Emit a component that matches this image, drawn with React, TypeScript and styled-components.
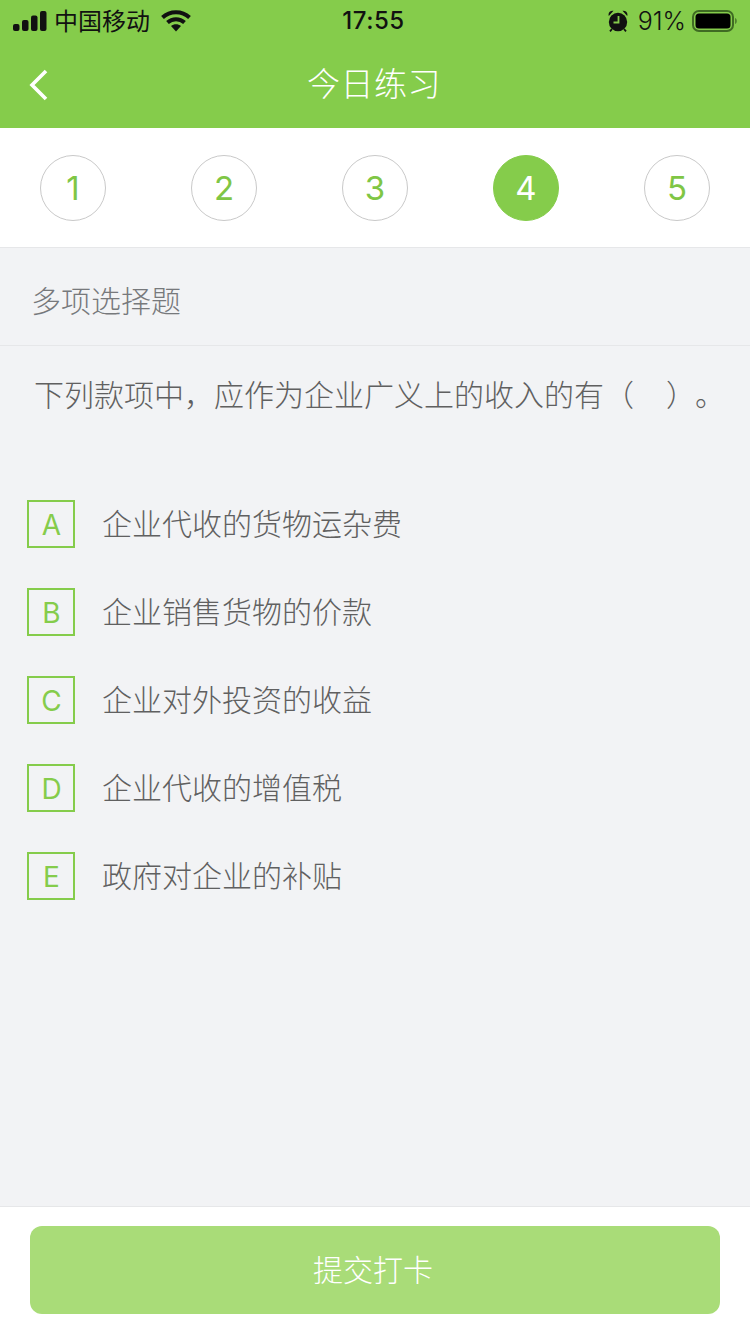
import React from "react";
import styled, { createGlobalStyle } from "styled-components";

const GlobalStyle = createGlobalStyle`
  html, body { margin: 0; padding: 0; background: #f2f3f5; }
  * { box-sizing: border-box; }
  body { font-family: "Noto Sans CJK SC", "Liberation Sans", sans-serif; }
`;

const Page = styled.div`
  width: 750px;
  height: 1334px;
  display: flex;
  flex-direction: column;
  background: #f2f3f5;
  overflow: hidden;
`;
const Header = styled.header`
  height: 128px;
  flex: none;
  background: #85cc4b;
  display: flex;
  flex-direction: column;
`;
const StatusBar = styled.div`
  height: 40px;
  display: grid;
  grid-template-columns: 1fr auto 1fr;
  align-items: center;
  padding: 1px 13px 0;
  color: #111;
`;
const StatusLeft = styled.div`
  display: flex;
  align-items: center;
`;
const Carrier = styled.span`
  font-size: 24px;
  line-height: 34px;
  padding-bottom: 2px;
  margin-left: 7px;
  margin-right: 11px;
`;
const Clock = styled.span`
  font: 500 24px/40px "Inter", "Liberation Sans", sans-serif;
  letter-spacing: 0.5px;
  margin-left: -3px;
`;
const StatusRight = styled.div`
  display: flex;
  align-items: center;
  justify-content: flex-end;
`;
const Percent = styled.span`
  font: 300 25px/40px "Inter", "Liberation Sans", sans-serif;
  margin: 0 6px 0 10px;
`;
const NavBar = styled.div`
  position: relative;
  height: 88px;
  display: flex;
  align-items: center;
  justify-content: center;
  padding-bottom: 4px;
`;
const Back = styled.svg`
  position: absolute;
  left: 27px;
  top: 28px;
`;
const Title = styled.h1`
  margin: 0 2px 0 0;
  font-size: 33px;
  font-weight: 300;
  letter-spacing: 0.5px;
  color: #fff;
`;
const Stepper = styled.nav`
  height: 120px;
  flex: none;
  background: #fff;
  border-bottom: 1px solid #e6e7e9;
  display: flex;
  justify-content: space-between;
  padding: 27px 40px 0;
`;
const Step = styled.div<{ $active?: boolean }>`
  width: 66px;
  height: 66px;
  border-radius: 50%;
  border: 1px solid ${(p) => (p.$active ? "#85cc4b" : "#c9c9c9")};
  background: ${(p) => (p.$active ? "#85cc4b" : "#fff")};
  color: ${(p) => (p.$active ? "#fff" : "#7fc645")};
  font: 400 33px/64px "Inter", "Liberation Sans", sans-serif;
  text-align: center;
`;
const SectionHead = styled.div`
  height: 98px;
  flex: none;
  padding: 0 31px;
  border-bottom: 1px solid #e6e7e9;
  font-size: 30px;
  font-weight: 300;
  line-height: 102px;
  color: #77797c;
`;
const Question = styled.p`
  margin: 0;
  height: 142px;
  flex: none;
  padding: 24px 0 0 34px;
  font-size: 30px;
  font-weight: 300;
  line-height: 46px;
  color: #606060;
  white-space: nowrap;
`;
const Closing = styled.span`
  margin: 0 14px 0 32px;
`;
const Options = styled.ul`
  list-style: none;
  margin: 0;
  padding: 12px 0 0 27px;
  display: flex;
  flex-direction: column;
  gap: 40px;
  flex: 1;
`;
const Option = styled.li`
  display: flex;
  align-items: center;
  height: 48px;
`;
const Letter = styled.span`
  width: 48px;
  height: 48px;
  flex: none;
  border: 2px solid #85cc4b;
  color: #85cc4b;
  font: 400 28px/46px "Inter", "Liberation Sans", sans-serif;
  text-align: center;
  padding-left: 1px;
  margin-right: 27px;
`;
const OptionText = styled.span`
  font-size: 30px;
  font-weight: 300;
  line-height: 44px;
  padding-bottom: 4px;
  color: #606060;
`;
const Footer = styled.footer`
  height: 128px;
  flex: none;
  background: #fff;
  border-top: 1px solid #e6e7e9;
  padding: 19px 30px 0;
`;
const Submit = styled.button`
  width: 690px;
  height: 88px;
  border: 0;
  border-radius: 12px;
  background: #a9dc78;
  color: #fff;
  font-family: inherit;
  font-size: 30px;
  font-weight: 300;
  padding: 0 4px 4px 0;
`;

const options = [
  ["A", "企业代收的货物运杂费"],
  ["B", "企业销售货物的价款"],
  ["C", "企业对外投资的收益"],
  ["D", "企业代收的增值税"],
  ["E", "政府对企业的补贴"],
];

const Signal = () => (
  <svg width="34" height="20" viewBox="0 0 34 20" fill="#111">
    <rect x="0" y="13" width="6.5" height="7" rx="2" />
    <rect x="9" y="9" width="6.5" height="11" rx="2" />
    <rect x="18" y="4.5" width="6.5" height="15.5" rx="2" />
    <rect x="27" y="0" width="6.5" height="20" rx="2" />
  </svg>
);
const Wifi = () => (
  <svg width="30" height="22" viewBox="0 0 30 22" fill="none" stroke="#111" strokeWidth="4">
    <path d="M1.5 7.5C9 .5 21 .5 28.5 7.5" />
    <path d="M6.5 12.5c4.8-4.4 12.2-4.4 17 0" />
    <path d="M15 21.5l-5-5.5c2.8-2.2 7.2-2.2 10 0z" fill="#111" stroke="none" />
  </svg>
);
const Alarm = () => (
  <svg width="20" height="22" viewBox="0 0 20 22">
    <circle cx="10" cy="12" r="9.2" fill="#111" />
    <path d="M10.5 6V12.5H5.5" stroke="#85cc4b" strokeWidth="1.8" fill="none" />
    <path d="M.8 6C-.2 3 2 .4 5.5 .8zM19.2 6C20.2 3 18 .4 14.5 .8z" fill="#111" />
    <path d="M4 19l-2 2.4M16 19l2 2.4" stroke="#111" strokeWidth="1.8" />
  </svg>
);
const Battery = () => (
  <svg width="45" height="22" viewBox="0 0 45 22">
    <rect x="1" y="1" width="40" height="20" rx="6" fill="none" stroke="#3f6b23" strokeWidth="2" />
    <rect x="3.5" y="3.5" width="35" height="15" rx="3.5" fill="#000" />
    <path d="M43 8c1.4.6 1.8 1.8 1.8 3s-.4 2.4-1.8 3z" fill="#4f7f2e" />
  </svg>
);

export default function App() {
  return (
    <Page>
      <GlobalStyle />
      <Header>
        <StatusBar>
          <StatusLeft>
            <Signal />
            <Carrier>中国移动</Carrier>
            <Wifi />
          </StatusLeft>
          <Clock>17:55</Clock>
          <StatusRight>
            <Alarm />
            <Percent>91%</Percent>
            <Battery />
          </StatusRight>
        </StatusBar>
        <NavBar>
          <Back width="24" height="34" viewBox="0 0 24 34" fill="none" stroke="#fff" strokeWidth="3.6">
            <path d="M19 3L5 17l14 14" />
          </Back>
          <Title>今日练习</Title>
        </NavBar>
      </Header>
      <Stepper>
        {[1, 2, 3, 4, 5].map((n) => (
          <Step key={n} $active={n === 4}>{n}</Step>
        ))}
      </Stepper>
      <SectionHead>多项选择题</SectionHead>
      <Question>下列款项中，应作为企业广义上的收入的有（<Closing>）</Closing>。</Question>
      <Options>
        {options.map(([l, t]) => (
          <Option key={l}>
            <Letter>{l}</Letter>
            <OptionText>{t}</OptionText>
          </Option>
        ))}
      </Options>
      <Footer>
        <Submit>提交打卡</Submit>
      </Footer>
    </Page>
  );
}
